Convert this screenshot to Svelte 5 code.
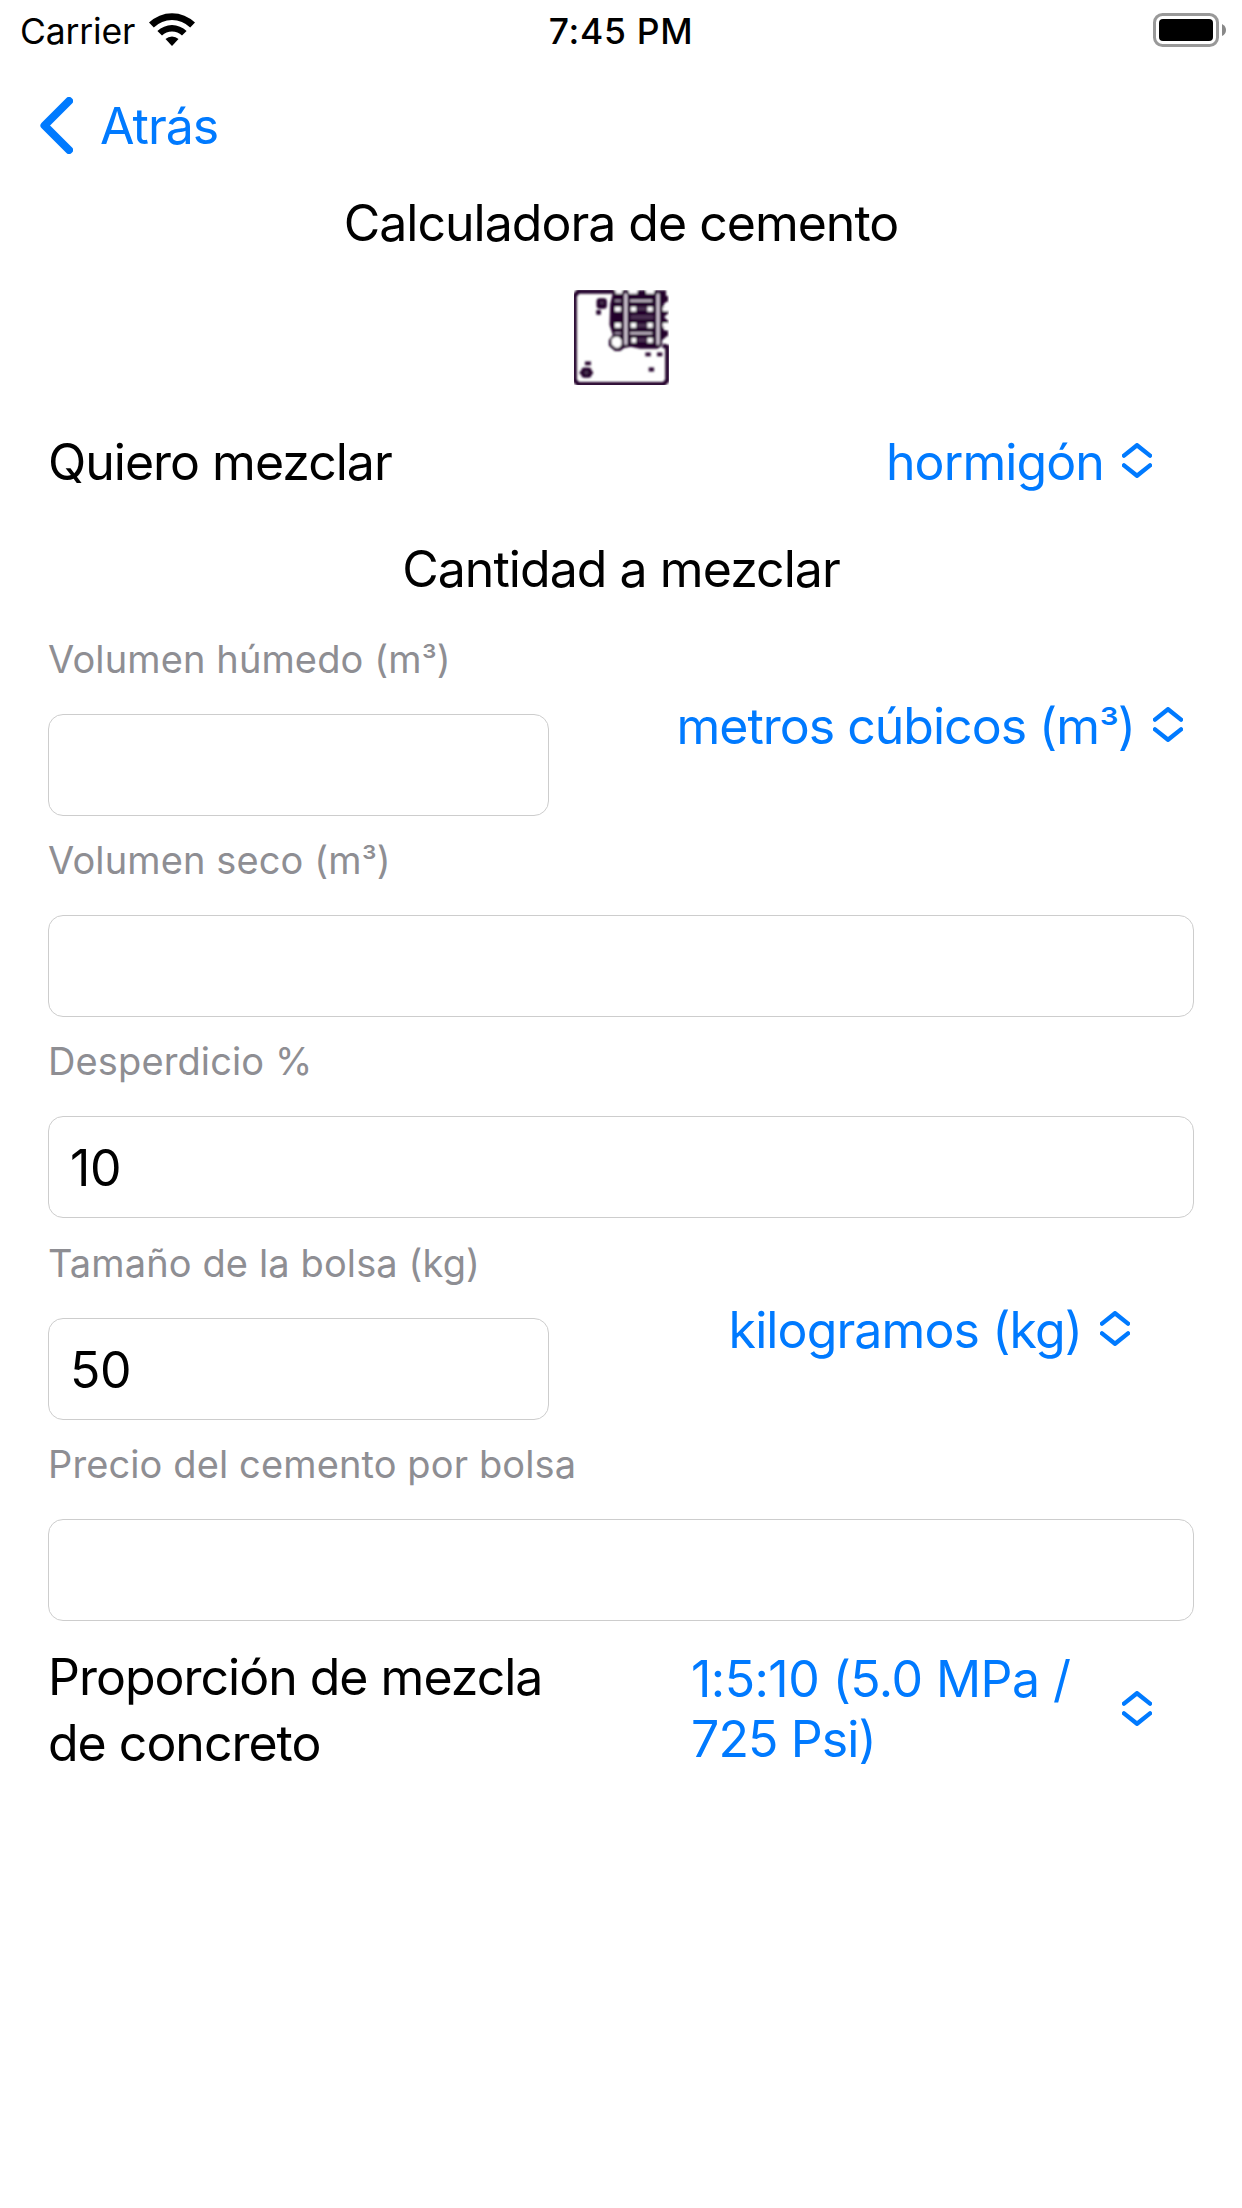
<script>
  let wetVolume = $state('');
  let dryVolume = $state('');
  let waste = $state('10');
  let bagSize = $state('50');
  let price = $state('');
</script>

{#snippet chevrons()}
  <svg class="chevrons" viewBox="0 0 30 35" aria-hidden="true">
    <path d="M2 12.6 15 2.2 28 12.6M2 22.4 15 32.8 28 22.4" />
  </svg>
{/snippet}

<div class="screen">
  <header class="status">
    <div class="carrier">
      <span>Carrier</span>
      <svg class="wifi" viewBox="0 0 46 33" aria-hidden="true">
        <path d="M0 9.6A33 33 0 0 1 46 9.6L41.2 14.4A26 26 0 0 0 4.8 14.4Z" />
        <path d="M8.4 18A21 21 0 0 1 37.6 18L33 22.6A14.5 14.5 0 0 0 13 22.6Z" />
        <path d="M16.5 26A9.5 9.5 0 0 1 29.5 26L23 33Z" />
      </svg>
    </div>
    <span class="time">7:45 PM</span>
    <svg class="battery" viewBox="0 0 74 34" aria-hidden="true">
      <rect x="1.5" y="1.5" width="63" height="31" rx="8" fill="none" stroke="#999" stroke-width="3" />
      <rect x="6" y="6" width="54" height="22" rx="4" />
      <path d="M69 11Q73 13 73 17T69 23Z" fill="#888" />
    </svg>
  </header>

  <nav class="nav">
    <svg class="back" viewBox="0 0 33 57" aria-hidden="true"><path d="M29 4 4.500 28.500 29 53" /></svg>
    <span>Atrás</span>
  </nav>

  <h1 class="title">Calculadora de cemento</h1>

  <!-- concrete slab with exposed rebar -->
  <svg class="slab" viewBox="38 30 289 288" aria-hidden="true">
    <defs><filter id="soft" x="0" y="0" width="1" height="1"><feGaussianBlur stdDeviation="2.6" /></filter></defs>
    <g filter="url(#soft)">
      <path d="M160 34H54L43 46V302L54 313H311L322 302V201L308 197" fill="none" stroke="#210429" stroke-width="13" />
      <path d="M160 30H318V66L309 75 318 84H326V98L312 111 326 124V138H318L309 147 318 155V171L306 181V197L292 206H240L212 200 192 204 180 213H164L146 197V180L158 165 148 135 150 72Z" fill="#210429" />
      <path d="M154 178 164 171H176L184 181V194L176 203H166L155 193Z" fill="#fff" />
      <path d="M197 40V194M294 40V194" stroke="#d8cfdb" stroke-width="9" />
      <path d="M210 62H276M210 160H276" stroke="#d8cfdb" stroke-width="6" />
      <path d="M164 62H182M164 160H182" stroke="#a495aa" stroke-width="6" />
      <path d="M166 34H186M206 34H232M258 34H282M164 87H182M164 136H182M212 87H228M262 87H278M212 136H228M262 136H278M214 181H228M262 181H278" stroke="#fff" stroke-width="14" />
      <path d="M230 86H260M230 136H260M232 180H258" stroke="#4b3153" stroke-width="10" />
      <path d="M212 111H280" stroke="#4b3153" stroke-width="12" />
      <path d="M308 87H327M308 135H327" stroke="#fff" stroke-width="13" />
      <path d="M313 56H324M313 160H324" stroke="#210429" stroke-width="17" />
      <g fill="#210429">
        <rect x="109" y="54" width="31" height="32" rx="9" />
        <rect x="108" y="90" width="14" height="14" rx="2" />
        <rect x="63" y="263" width="31" height="31" rx="10" />
        <path d="M74 245H92V256H74ZM256 218H272V229H256ZM291 218H307V229H291ZM266 263H282V275H266ZM58 274H98V283H58Z" />
      </g>
      <path d="M120 68H130M73 278H83" stroke="#513a59" stroke-width="8" />
    </g>
  </svg>

  <div class="row material">
    <span>Quiero mezclar</span>
    <div class="picker"><span class="loose">hormigón</span>{@render chevrons()}</div>
  </div>

  <h2 class="title subtitle">Cantidad a mezclar</h2>

  <div class="fields">
    <div class="row">
      <label class="field short"><span>Volumen húmedo (m<span class="cube">³</span>)</span><input bind:value={wetVolume} /></label>
      <div class="picker volume"><span>metros cúbicos (m<span class="cube">³</span>)</span>{@render chevrons()}</div>
    </div>
    <label class="field"><span>Volumen seco (m<span class="cube">³</span>)</span><input bind:value={dryVolume} /></label>
    <label class="field"><span>Desperdicio %</span><input bind:value={waste} /></label>
    <div class="row">
      <label class="field short"><span>Tamaño de la bolsa (kg)</span><input bind:value={bagSize} /></label>
      <div class="picker weight"><span class="loose">kilogramos (kg)</span>{@render chevrons()}</div>
    </div>
    <label class="field"><span>Precio del cemento por bolsa</span><input bind:value={price} /></label>
  </div>

  <div class="row ratio">
    <span>Proporción de mezcla<br />de concreto</span>
    <div class="picker"><span class="loose"><span class="mix">1:5:10 (5.0 MPa /</span><br />725 Psi)</span>{@render chevrons()}</div>
  </div>
</div>

<style>
  :global(body) { background: #fff; }
  .screen {
    width: 1242px;
    height: 2208px;
    box-sizing: border-box;
    overflow: hidden;
    background: #fff;
    color: #000;
    font-family: Inter, "Liberation Sans", sans-serif;
    font-size: 50px;
    line-height: 66px;
    letter-spacing: -1px;
    white-space: nowrap;
  }
  svg { display: block; flex: none; }
  .status {
    display: grid;
    grid-template-columns: 1fr auto 1fr;
    height: 62px;
    padding: 0 15px;
    font-size: 35.5px;
    line-height: 64px;
    letter-spacing: -0.15px;
  }
  .carrier { display: flex; gap: 14px; padding-left: 5px; }
  .wifi { width: 46px; height: 33px; margin-top: 13px; }
  .time { font-weight: 500; letter-spacing: 0.7px; }
  .battery { width: 74px; height: 34px; margin-top: 13px; justify-self: end; }
  .nav {
    display: flex;
    align-items: center;
    height: 128px;
    padding-left: 40px;
    gap: 27px;
    color: #007aff;
  }
  .back { width: 33px; height: 57px; margin-bottom: 1px; }
  .back path { fill: none; stroke: #007aff; stroke-width: 8; stroke-linecap: round; stroke-linejoin: round; }
  .title { margin: 0; font: inherit; text-align: center; }
  .slab { width: 96px; height: 96px; margin: 34px auto 43px 573px; }
  .row { display: flex; justify-content: space-between; align-items: flex-start; }
  .material { padding: 0 90px 0 48px; }
  .subtitle { margin-top: 41px; letter-spacing: -0.95px; }
  .picker { display: flex; align-items: center; gap: 18px; color: #007aff; }
  .loose { letter-spacing: -0.9px; }
  .mix { letter-spacing: -0.55px; }
  .cube { font-size: 0.88em; line-height: 1; }
  .chevrons { width: 30px; height: 35px; margin-bottom: 3px; }
  .chevrons path { fill: none; stroke: #007aff; stroke-width: 4.4; stroke-linecap: round; stroke-linejoin: round; }
  .fields { display: flex; flex-direction: column; gap: 18.35px; margin: 31px 48px 0; }
  .field {
    display: flex;
    flex-direction: column;
    gap: 28.9px;
    color: #8e8e93;
    font-size: 38px;
    line-height: 52px;
    letter-spacing: 0.12px;
  }
  .field > span { align-self: flex-start; }
  .short { width: 501px; }
  input {
    box-sizing: border-box;
    width: 100%;
    height: 102px;
    padding: 2px 21px 0;
    border: 1px solid #cdcdcd;
    border-radius: 15px;
    outline: 0;
    background: #fff;
    color: #000;
    font: 50px Inter, "Liberation Sans", sans-serif;
    letter-spacing: -0.3px;
  }
  .volume { margin: 60px 11px 0 0; }
  .weight { margin: 60px 64px 0 0; }
  .ratio { align-items: center; padding: 0 90px 0 48px; margin-top: 23px; }
  .ratio .picker { width: 461px; margin-bottom: 2px; justify-content: space-between; line-height: 60px; }
  .ratio .chevrons { margin-bottom: 0; }
</style>
